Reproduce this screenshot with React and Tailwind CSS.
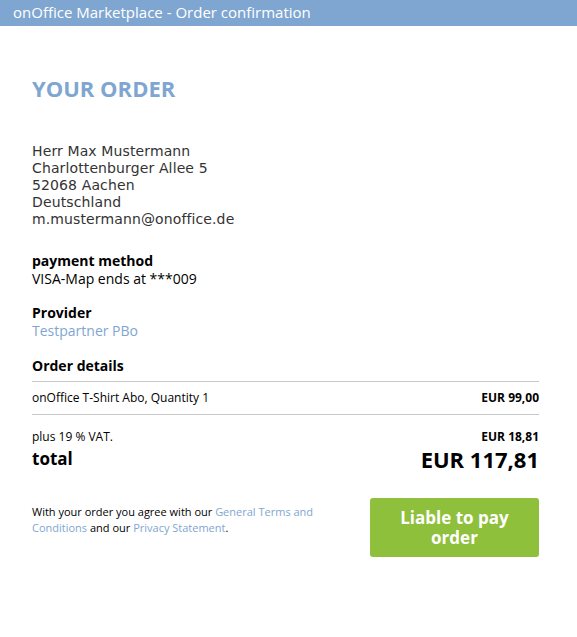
import React from 'react';

const App = () => {
    return (
        <div className="min-h-[637px] w-[577px] bg-white font-['Open_Sans',sans-serif] text-black">
            <div className="h-[26px] bg-[#7fa6d1] pl-[13px] text-[15px] leading-[25px] text-white">
                onOffice Marketplace - Order confirmation
            </div>

            <div className="pl-[32px] pr-[38px]">
                <h1 className="mt-[48px] text-[22px] font-bold leading-[28px] text-[#7fa6d1]">YOUR ORDER</h1>

                <div className="mt-[41px] font-['DejaVu_Sans',sans-serif] text-[14px] leading-[17px] tracking-[0.12px] text-[#333]">
                    <div>Herr Max Mustermann</div>
                    <div>Charlottenburger Allee 5</div>
                    <div>52068 Aachen</div>
                    <div>Deutschland</div>
                    <div>m.mustermann@onoffice.de</div>
                </div>

                <div className="mt-[24px] text-[14px] leading-[18px]">
                    <div className="font-bold">payment method</div>
                    <div>VISA-Map ends at ***009</div>
                </div>

                <div className="mt-[16px] text-[14px] leading-[18px]">
                    <div className="font-bold">Provider</div>
                    <div className="text-[#7fa6d1]">Testpartner PBo</div>
                </div>

                <div className="mt-[17px] text-[14px] font-bold leading-[18px]">Order details</div>

                <div className="mt-[6px] flex items-center justify-between border-y border-[#c8c8c8] py-[7px] text-[12px] leading-[18px]">
                    <span>onOffice T-Shirt Abo, Quantity 1</span>
                    <span className="font-bold">EUR 99,00</span>
                </div>

                <div className="mt-[13px] flex items-center justify-between text-[12px] leading-[17px]">
                    <span>plus 19 % VAT.</span>
                    <span className="font-bold">EUR 18,81</span>
                </div>
                <div className="flex items-center justify-between font-bold">
                    <span className="text-[17px] leading-[28px]">total</span>
                    <span className="text-[22px] leading-[28px]">EUR 117,81</span>
                </div>

                <div className="mt-[25px] flex items-start justify-between">
                    <p className="mt-[6px] w-[290px] text-[11px] leading-[16px]">
                        With your order you agree with our <a className="text-[#7fa6d1]">General Terms and Conditions</a> and our <a className="text-[#7fa6d1]">Privacy Statement</a>.
                    </p>
                    <button className="flex h-[59px] w-[169px] items-center justify-center rounded-[3px] bg-[#8fc03c] text-[17px] font-bold leading-[20px] text-white">
                        Liable to pay<br />order
                    </button>
                </div>
            </div>
        </div>
    );
};

export default App;
